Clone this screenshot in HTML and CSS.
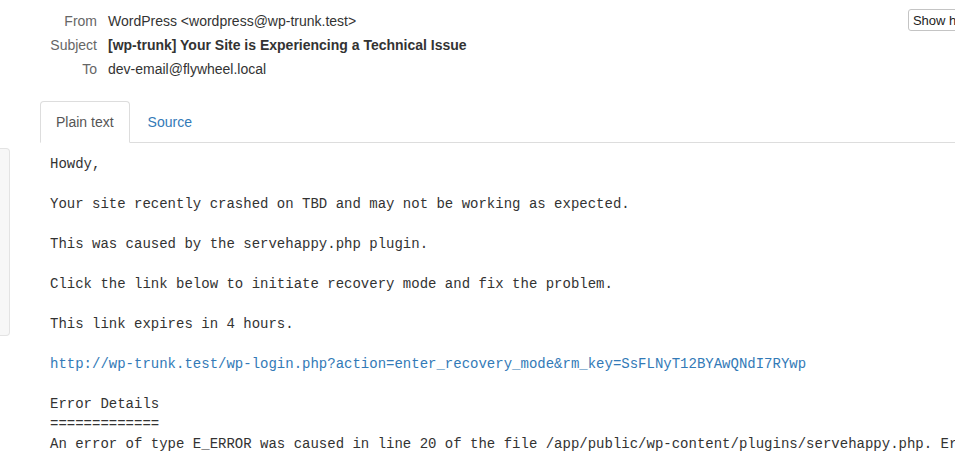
FILE: index.html
```html
<!DOCTYPE html>
<html>
<head>
<meta charset="utf-8">
<link rel="stylesheet" href="styles.css">
</head>
<body>
<div class="page">
  <aside class="sidebar"></aside>
  <main class="content">
    <div class="header">
      <table class="meta">
        <tr><th>From</th><td>WordPress &lt;wordpress@wp-trunk.test&gt;</td></tr>
        <tr><th>Subject</th><td class="subject">[wp-trunk] Your Site is Experiencing a Technical Issue</td></tr>
        <tr><th>To</th><td>dev-email@flywheel.local</td></tr>
      </table>
      <button class="show-headers">Show headers</button>
    </div>
    <ul class="tabs">
      <li class="tab active"><a>Plain text</a></li>
      <li class="tab"><a>Source</a></li>
    </ul>
    <pre class="body">Howdy,

Your site recently crashed on TBD and may not be working as expected.

This was caused by the servehappy.php plugin.

Click the link below to initiate recovery mode and fix the problem.

This link expires in 4 hours.

<a class="link">http://wp-trunk.test/wp-login.php?action=enter_recovery_mode&amp;rm_key=SsFLNyT12BYAwQNdI7RYwp</a>

Error Details
=============
An error of type E_ERROR was caused in line 20 of the file /app/public/wp-content/plugins/servehappy.php. Error message: Uncaught Error</pre>
  </main>
</div>
</body>
</html>
```
FILE: styles.css
```css
html, body {
  margin: 0;
  padding: 0;
  overflow: hidden;
  background: #fff;
}
body {
  font-family: "Liberation Sans", Arial, Helvetica, sans-serif;
  font-size: 14px;
  line-height: 20px;
  color: #333;
  width: 955px;
  height: 475px;
}
.page {
  display: flex;
  align-items: flex-start;
}
.sidebar {
  flex: 0 0 auto;
  width: 9px;
  height: 186px;
  margin-top: 148px;
  background: #f7f7f7;
  border: 1px solid #e3e3e3;
  border-left: none;
  border-radius: 0 4px 4px 0;
}
.content {
  flex: 1 1 auto;
  min-width: 0;
  padding-left: 30px;
}
.header {
  display: flex;
  justify-content: space-between;
  align-items: flex-start;
  padding-top: 9px;
}
.meta {
  border-collapse: collapse;
}
.meta th {
  font-weight: normal;
  color: #666;
  text-align: right;
  padding: 2px 11px 2px 0;
  width: 57px;
}
.meta td {
  padding: 2px 0;
  color: #333;
}
.meta .subject {
  font-weight: bold;
}
.show-headers {
  flex: 0 0 auto;
  margin-right: -46px;
  height: 22px;
  padding: 0 4px;
  font-family: "Liberation Sans", Arial, sans-serif;
  font-size: 13px;
  color: #222;
  background: #fff;
  border: 1px solid #c4c4c4;
  border-radius: 3px;
  white-space: nowrap;
}
.tabs {
  list-style: none;
  margin: 20px 0 0 0;
  padding: 0;
  display: flex;
  border-bottom: 1px solid #ddd;
}
.tab {
  margin-right: 2px;
  margin-bottom: -1px;
}
.tab a {
  display: block;
  padding: 10px 15px;
  border: 1px solid transparent;
  border-radius: 4px 4px 0 0;
  color: #337ab7;
}
.tab.active a {
  color: #555;
  background: #fff;
  border-color: #ddd #ddd transparent #ddd;
}
.body {
  margin: 0;
  padding: 11px 10px 9px;
  font-family: "Liberation Mono", "Courier New", monospace;
  font-size: 14px;
  line-height: 20px;
  color: #333;
  white-space: pre;
  overflow: hidden;
}
.link {
  color: #337ab7;
}
```
